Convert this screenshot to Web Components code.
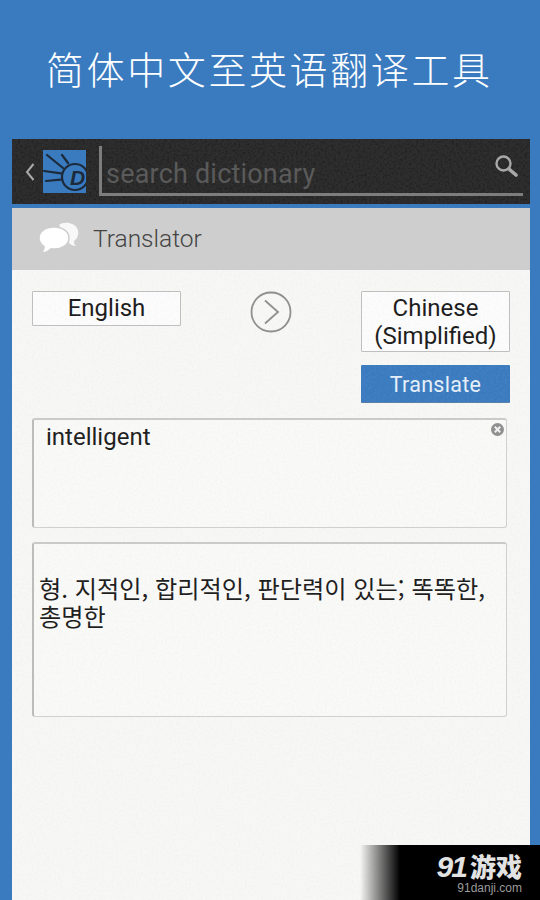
<!DOCTYPE html>
<html lang="zh">
<head>
<meta charset="utf-8">
<title>Translator</title>
<style>
  html, body { margin: 0; padding: 0; height: 900px; overflow: hidden; }
  body {
    background: #3a7bc0;
    font-family: Roboto, "Noto Sans", sans-serif;
    display: flex;
    flex-direction: column;
    position: relative;
  }
</style>
</head>
<body>
<app-title>简体中文至英语翻译工具</app-title>
<main-panel>
  <search-bar placeholder="search dictionary"></search-bar>
  <section-header>Translator</section-header>
  <translator-form>
    <lang-button slot="from">English</lang-button>
    <swap-arrow slot="arrow"></swap-arrow>
    <lang-button slot="to">Chinese (Simplified)</lang-button>
    <translate-button slot="action">Translate</translate-button>
    <text-box slot="input" clearable>intelligent</text-box>
    <text-box slot="output" lang="ko">형. 지적인, 합리적인, 판단력이 있는; 똑똑한, 총명한</text-box>
  </translator-form>
</main-panel>
<site-badge></site-badge>

<script>
const define = (name, html) => {
  customElements.define(name, class extends HTMLElement {
    constructor() {
      super();
      this.attachShadow({ mode: 'open' }).innerHTML = html;
    }
  });
};

// paper grain laid over a surface, does not take part in layout
const grain = (id, tone, strength) => `
  <svg class="grain" aria-hidden="true" style="position:absolute;inset:0;width:100%;height:100%;pointer-events:none">
    <filter id="${id}">
      <feTurbulence type="fractalNoise" baseFrequency=".45" numOctaves="2" seed="4"/>
      <feColorMatrix values="0 0 0 0 ${tone}  0 0 0 0 ${tone}  0 0 0 0 ${tone}  ${strength} 0 0 0 ${-strength * 0.42}"/>
    </filter>
    <rect width="100%" height="100%" filter="url(#${id})"/>
  </svg>`;

define('app-title', `
  <style>
    :host {
      display: block;
      height: 139px;
      box-sizing: border-box;
      padding: 40px 0 0 46px;
      color: #fff;
      font: 300 38px/56px "Noto Sans CJK SC", sans-serif;
      letter-spacing: 2.6px;
      white-space: nowrap;
    }
  </style>
  <slot></slot>
`);

define('main-panel', `
  <style>
    :host {
      display: flex;
      flex-direction: column;
      flex: 1;
      margin: 0 10px 0 12px;
      background: #f7f7f6;
    }
  </style>
  <slot></slot>
`);

class SearchBar extends HTMLElement {
  constructor() {
    super();
    this.attachShadow({ mode: 'open' }).innerHTML = `
      <style>
        :host {
          display: flex;
          align-items: flex-start;
          position: relative;
          height: 69px;
          box-sizing: border-box;
          background: #2f2e2e;
          border-bottom: 4px solid #3a7bc0;
        }
        .back, .logo, .field { position: relative; }
        .back { margin: 24px 0 0 13px; width: 10px; height: 18px; }
        .logo { margin: 11px 0 0 8px; width: 43px; height: 43px; flex: none; }
        .field {
          margin: 7px 7px 0 13px;
          flex: 1;
          height: 50px;
          box-sizing: border-box;
          border-left: 3px solid #7d7d7d;
          border-bottom: 3px solid #7d7d7d;
          display: flex;
          align-items: flex-start;
          justify-content: space-between;
        }
        .hint {
          margin: 9px 0 0 4px;
          font: 27px/38px Roboto, sans-serif;
          letter-spacing: .2px;
          color: #5a5a5a;
        }
        .glass { margin: 8px 5px 0 0; width: 24px; height: 24px; }
      </style>
      ${grain('bar-grain', 0, 0.7)}
      <svg class="back" viewBox="0 0 10 18"><path d="M8.500 1 2 9l6.500 8" fill="none" stroke="#a9a9a9" stroke-width="2"/></svg>
      <svg class="logo" viewBox="0 0 43 43">
        <rect width="43" height="43" fill="#3a7bc0"/>
        <g fill="none" stroke="#1c2a3a" stroke-width="2.200" stroke-linecap="round">
          <circle cx="32" cy="27" r="13"/>
          <path d="M4 5 20 18M19 5l6 8M1 21l17 2.300M3 31l14.500-1.300"/>
        </g>
        <text x="34.500" y="34.500" text-anchor="middle" font-family="Liberation Sans, sans-serif" font-size="21" font-weight="700" font-style="italic" fill="#1c2a3a">D</text>
      </svg>
      <div class="field">
        <span class="hint">${this.getAttribute('placeholder')}</span>
        <svg class="glass" viewBox="0 0 24 24">
          <circle cx="9.500" cy="9.500" r="7" fill="none" stroke="#a8a8a8" stroke-width="2.400"/>
          <path d="m15 15 7 6" stroke="#a8a8a8" stroke-width="3.600" stroke-linecap="round"/>
        </svg>
      </div>
    `;
  }
}
customElements.define('search-bar', SearchBar);

define('section-header', `
  <style>
    :host {
      display: flex;
      align-items: center;
      gap: 14px;
      height: 62px;
      box-sizing: border-box;
      padding: 0 0 1px 26px;
      background: #cecece;
      color: #444;
      font: 300 24.500px Roboto, sans-serif;
    }
    svg { width: 41px; height: 34px; }
  </style>
  <svg viewBox="0 0 41 34">
    <path d="M21 3c3-2.500 9-3 13-1 5 2 7 6 6 11-.5 3-2.500 5-4 6 0 2 .7 4 2 5-3 0-5-1-7-3z" fill="#fff" opacity=".85"/>
    <path d="M16 5c8 0 15 4 15 11s-7 11-15 11c-1 0-2 0-3-.2C11 29 7 31 3 31c2-1.500 3-4 3-6.500C3 22.500 1 19.500 1 16 1 9 8 5 16 5z" fill="#fff" stroke="#cecece" stroke-width="1.500"/>
  </svg>
  <slot></slot>
`);

define('translator-form', `
  <style>
    :host {
      display: grid;
      position: relative;
      grid-template-columns: 149px 1fr 149px;
      grid-template-rows: 61px 38px 112px 176px;
      row-gap: 13px;
      padding: 21px 20px 0;
      font: 24px/28px Roboto, sans-serif;
      color: #1a1a1a;
      flex: 1;
      align-content: start;
    }
    ::slotted([slot="action"]) { grid-column: 3; }
    ::slotted([slot="input"]), ::slotted([slot="output"]) { grid-column: 1 / -1; margin-right: 3px; }
    ::slotted([slot="input"]) { margin-top: 2px; }
    ::slotted([slot="output"]) { margin-top: 1px; }
    slot { display: contents; }
  </style>
  <slot name="from"></slot>
  <slot name="arrow"></slot>
  <slot name="to"></slot>
  <slot name="action"></slot>
  <slot name="input"></slot>
  <slot name="output"></slot>
  ${grain('paper-grain', 0.55, 0.22)}
`);

define('lang-button', `
  <style>
    :host {
      display: block;
      align-self: start;
      box-sizing: border-box;
      min-height: 35px;
      border: 1px solid #bfbfbf;
      border-radius: 1px;
      background: #fcfcfc;
      text-align: center;
      padding: 2px 4px 1px;
      color: #1a1a1a;
    }
  </style>
  <slot></slot>
`);

define('swap-arrow', `
  <style>
    :host { display: block; justify-self: center; align-self: start; width: 42px; height: 42px; }
    svg { display: block; width: 42px; height: 42px; }
  </style>
  <svg viewBox="0 0 42 42">
    <circle cx="21" cy="21" r="19.500" fill="none" stroke="#8e8e8e" stroke-width="1.800"/>
    <path d="M15 9.500 28 21 15 32.500" fill="none" stroke="#8e8e8e" stroke-width="1.800"/>
  </svg>
`);

define('translate-button', `
  <style>
    :host {
      display: flex;
      align-items: center;
      justify-content: center;
      background: #3a7bc0;
      border-bottom: 1px solid #5c7ea3;
      box-sizing: border-box;
      padding-top: 2px;
      border-radius: 1px;
      color: #e6f0fa;
      font-size: 21.500px;
      letter-spacing: .3px;
    }
  </style>
  <slot></slot>
`);

class TextBox extends HTMLElement {
  constructor() {
    super();
    const clear = this.hasAttribute('clearable')
      ? `<svg class="clear" viewBox="0 0 12 12">
           <circle cx="6" cy="6" r="6" fill="#8f8f8f"/>
           <path d="m3.500 3.500 5 5m0-5-5 5" stroke="#f2f2f2" stroke-width="1.800"/>
         </svg>`
      : '';
    const ko = this.getAttribute('lang') === 'ko';
    this.attachShadow({ mode: 'open' }).innerHTML = `
      <style>
        :host {
          display: block;
          position: relative;
          box-sizing: border-box;
          border: 1px solid #d0d0d0;
          border-left: 2px solid #bcbcbc;
          border-top: 2px solid #cacaca;
          border-radius: 3px;
          background: #f9f9f8;
          padding: ${ko ? '30px 12px 0 5px' : '1px 30px 0 12px'};
          font: ${ko ? '24.200px/28px "Noto Sans CJK KR", sans-serif' : '24px/32px Roboto, sans-serif'};
          color: #1c1c1c;
        }
        .clear { position: absolute; top: 3px; right: 2px; width: 13px; height: 13px; }
      </style>
      <slot></slot>
      ${clear}
    `;
  }
}
customElements.define('text-box', TextBox);

define('site-badge', `
  <style>
    :host {
      position: absolute;
      right: 0;
      bottom: 0;
      width: 180px;
      height: 55px;
      background: linear-gradient(90deg, rgba(0,0,0,0) 0, #000 40px);
      display: flex;
      flex-direction: column;
      align-items: flex-end;
      padding: 8px 18px 0 0;
      box-sizing: border-box;
    }
    .brand { font: 900 26px/26px "Noto Sans CJK SC", sans-serif; color: #e2e2e2; white-space: nowrap; }
    .brand i { font: italic 900 30px/26px "Liberation Sans", sans-serif; letter-spacing: -2px; margin-right: 4px; }
    .url { margin-top: 1px; font: 12px/14px "Liberation Sans", sans-serif; color: #9a9a9a; }
  </style>
  <div class="brand"><i>91</i>游戏</div>
  <div class="url">91danji.com</div>
`);
</script>
</body>
</html>
